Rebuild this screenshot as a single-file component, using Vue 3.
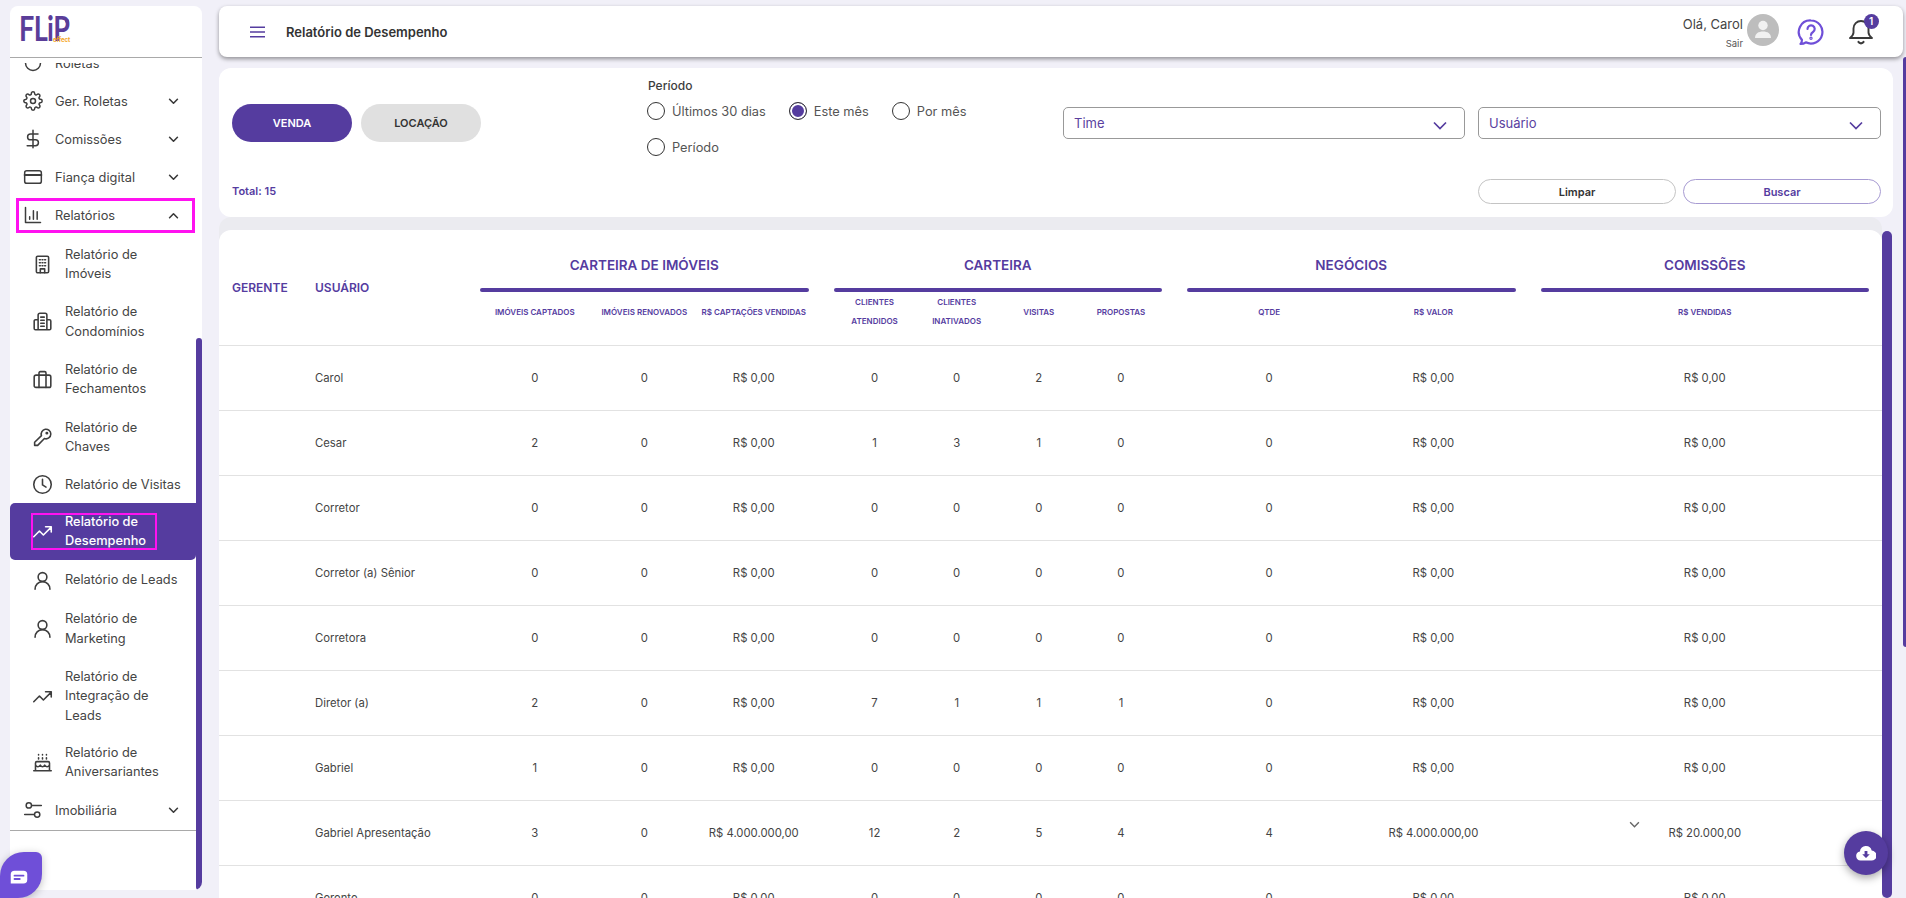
<script setup>
const iconPaths = {
  roleta: '<circle cx="12" cy="12" r="9"/>',
  gear: '<circle cx="12" cy="12" r="3"/><path d="M19.400 15a1.650 1.650 0 0 0 .33 1.820l.06.06a2 2 0 0 1 0 2.830 2 2 0 0 1-2.830 0l-.06-.06a1.650 1.650 0 0 0-1.820-.33 1.650 1.650 0 0 0-1 1.510V21a2 2 0 0 1-2 2 2 2 0 0 1-2-2v-.09A1.650 1.650 0 0 0 9 19.400a1.650 1.650 0 0 0-1.820.33l-.06.06a2 2 0 0 1-2.830 0 2 2 0 0 1 0-2.830l.06-.06a1.650 1.650 0 0 0 .33-1.820 1.650 1.650 0 0 0-1.510-1H3a2 2 0 0 1-2-2 2 2 0 0 1 2-2h.09A1.650 1.650 0 0 0 4.600 9a1.650 1.650 0 0 0-.33-1.820l-.06-.06a2 2 0 0 1 0-2.830 2 2 0 0 1 2.830 0l.06.06a1.650 1.650 0 0 0 1.820.33H9a1.650 1.650 0 0 0 1-1.510V3a2 2 0 0 1 2-2 2 2 0 0 1 2 2v.09a1.650 1.650 0 0 0 1 1.510 1.650 1.650 0 0 0 1.820-.33l.06-.06a2 2 0 0 1 2.830 0 2 2 0 0 1 0 2.830l-.06.06a1.650 1.650 0 0 0-.33 1.820V9a1.650 1.650 0 0 0 1.510 1H21a2 2 0 0 1 2 2 2 2 0 0 1-2 2h-.09a1.650 1.650 0 0 0-1.510 1z"/>',
  dollar: '<path d="M12 1.500v21M18 6H9a3.500 3.500 0 0 0 0 7h6a3.500 3.500 0 0 1 0 7H5"/>',
  card: '<rect x="2" y="4.500" width="20" height="15" rx="2.500"/><path d="M2 9.500h20" stroke-width="2.400"/>',
  chart: '<path d="M3 3v18h18M8 17v-3M12.500 17V7M17 17v-9"/>',
  building: '<rect x="5" y="2.500" width="14" height="19" rx="1.500"/><path d="M8.500 6.500h1M11.500 6.500h1M14.500 6.500h1M8.500 10h1M11.500 10h1M14.500 10h1M8.500 13.500h1M11.500 13.500h1M14.500 13.500h1M9.500 21.500V17h5v4.500"/>',
  condo: '<path d="M7 21.500V4.500a2 2 0 0 1 2-2h6a2 2 0 0 1 2 2v17zM7 10H4a1.500 1.500 0 0 0-1.500 1.500v8.500A1.500 1.500 0 0 0 4 21.500h3M17 10h3a1.500 1.500 0 0 1 1.500 1.500v8.500a1.500 1.500 0 0 1-1.500 1.500h-3M10 7h4M10 10.500h4M10 14h4M10 17.500h4"/>',
  case: '<rect x="2.500" y="7" width="19" height="14" rx="2"/><path d="M8 7V4.500A1.500 1.500 0 0 1 9.500 3h5A1.500 1.500 0 0 1 16 4.500V7M8 7v14M16 7v14"/>',
  key: '<path d="M21.500 8a5.500 5.500 0 0 1-7.300 5.200L6.500 21H3v-3.500l7.800-7.700A5.500 5.500 0 1 1 21.500 8z"/><circle cx="17" cy="7" r=".8"/>',
  clock: '<circle cx="12" cy="12" r="10"/><path d="M12 6v6.500l4 2.500"/>',
  trend: '<path d="M2 18l6.500-6.500 4.500 4.500 9-9M15.500 6.500H22v6"/>',
  user: '<circle cx="12" cy="8" r="5"/><path d="M3.500 22c0-5 3.500-8.500 8.500-8.500s8.500 3.500 8.500 8.500"/>',
  cake: '<path d="M2 21.500h20M4 21V12.500a1.500 1.500 0 0 1 1.500-1.500h13a1.500 1.500 0 0 1 1.500 1.500V21M4 15c2 2.500 3.500 2.500 5.500 0 1.500 2.500 3.500 2.500 5 0 2 2.500 3.500 2.500 5.500 0M7.500 8V6.500M12 8V6.500M16.500 8V6.500M7.500 3.500v-.5M12 3.500v-.5M16.500 3.500v-.5"/>',
  sliders: '<circle cx="7" cy="6.500" r="3.200"/><circle cx="17" cy="17.500" r="3.200"/><path d="M10.500 6.500H22M2 17.500h11.500"/>'
}

const topItems = [
  { label: 'Roletas', icon: 'roleta', noChev: true },
  { label: 'Ger. Roletas', icon: 'gear' },
  { label: 'Comissões', icon: 'dollar' },
  { label: 'Fiança digital', icon: 'card' }
]
const subItems = [
  { lines: ['Relatório de', 'Imóveis'], icon: 'building' },
  { lines: ['Relatório de', 'Condomínios'], icon: 'condo' },
  { lines: ['Relatório de', 'Fechamentos'], icon: 'case' },
  { lines: ['Relatório de', 'Chaves'], icon: 'key' },
  { lines: ['Relatório de Visitas'], icon: 'clock', cls: 'tight' },
  { lines: ['Relatório de', 'Desempenho'], icon: 'trend', active: true },
  { lines: ['Relatório de Leads'], icon: 'user' },
  { lines: ['Relatório de', 'Marketing'], icon: 'user' },
  { lines: ['Relatório de', 'Integração de', 'Leads'], icon: 'trend', cls: 'short' },
  { lines: ['Relatório de', 'Aniversariantes'], icon: 'cake' }
]
const radios = [
  { label: 'Últimos 30 dias' },
  { label: 'Este mês', on: true },
  { label: 'Por mês' },
  { label: 'Período', wrap: true }
]
const groups = [
  { title: 'CARTEIRA DE IMÓVEIS', cols: 3, subs: [['IMÓVEIS CAPTADOS'], ['IMÓVEIS RENOVADOS'], ['R$ CAPTAÇÕES VENDIDAS']] },
  { title: 'CARTEIRA', cols: 4, subs: [['CLIENTES', 'ATENDIDOS'], ['CLIENTES', 'INATIVADOS'], ['VISITAS'], ['PROPOSTAS']] },
  { title: 'NEGÓCIOS', cols: 2, subs: [['QTDE'], ['R$ VALOR']] },
  { title: 'COMISSÕES', cols: 1, subs: [['R$ VENDIDAS']] }
]
const z = 'R$ 0,00'
const rows = [
  ['Carol', [0, 0, z], [0, 0, 2, 0], [0, z], z],
  ['Cesar', [2, 0, z], [1, 3, 1, 0], [0, z], z],
  ['Corretor', [0, 0, z], [0, 0, 0, 0], [0, z], z],
  ['Corretor (a) Sênior', [0, 0, z], [0, 0, 0, 0], [0, z], z],
  ['Corretora', [0, 0, z], [0, 0, 0, 0], [0, z], z],
  ['Diretor (a)', [2, 0, z], [7, 1, 1, 1], [0, z], z],
  ['Gabriel', [1, 0, z], [0, 0, 0, 0], [0, z], z],
  ['Gabriel Apresentação', [3, 0, 'R$ 4.000.000,00'], [12, 2, 5, 4], [4, 'R$ 4.000.000,00'], 'R$ 20.000,00', true],
  ['Gerente', [0, 0, z], [0, 0, 0, 0], [0, z], z]
]
</script>

<template>
  <div class="page">
    <aside class="sidebar">
      <div class="logo">
        <span class="logo-word">FLiP</span>
        <span class="logo-dot"></span>
        <span class="logo-sub">effect</span>
      </div>
      <nav class="nav">
        <div class="nav-inner">
          <a v-for="it in topItems" :key="it.label" class="top-item">
            <svg class="ic" viewBox="0 0 24 24" v-html="iconPaths[it.icon]"></svg>
            <span class="top-label">{{ it.label }}</span>
            <svg v-if="!it.noChev" class="chev" viewBox="0 0 12 8"><path d="M1.500 1.500 6 6l4.500-4.500" /></svg>
          </a>
          <a class="top-item marked">
            <svg class="ic" viewBox="0 0 24 24" v-html="iconPaths.chart"></svg>
            <span class="top-label">Relatórios</span>
            <svg class="chev" viewBox="0 0 12 8"><path d="M1.500 6.500 6 2l4.500 4.500" /></svg>
          </a>
          <div class="sub-list">
            <a v-for="s in subItems" :key="s.lines.join()" class="sub-item" :class="[s.cls, { active: s.active }]">
              <svg class="ic sub-ic" viewBox="0 0 24 24" v-html="iconPaths[s.icon]"></svg>
              <span class="sub-label">
                <span v-for="l in s.lines" :key="l" class="sub-line">{{ l }}</span>
              </span>
              <span v-if="s.active" class="active-mark"></span>
            </a>
          </div>
          <a class="top-item">
            <svg class="ic" viewBox="0 0 24 24" v-html="iconPaths.sliders"></svg>
            <span class="top-label">Imobiliária</span>
            <svg class="chev" viewBox="0 0 12 8"><path d="M1.500 1.500 6 6l4.500-4.500" /></svg>
          </a>
        </div>
      </nav>
      <div class="nav-bottom"></div>
      <span class="side-scroll"></span>
    </aside>

    <div class="chat-blob">
      <svg viewBox="0 0 24 20" width="20" height="15"><path fill="#fff" d="M6 1h12a5 5 0 0 1 5 5v7a5 5 0 0 1-5 5H1V6a5 5 0 0 1 5-5z"/><path d="M6 7.500h12M6 12h7" stroke="#6f4fd8" stroke-width="2.400" stroke-linecap="round"/></svg>
    </div>

    <main class="main">
      <header class="topbar">
        <svg class="burger" viewBox="0 0 16 12"><path d="M0 1h16M0 6h16M0 11h16" /></svg>
        <h1 class="page-title">Relatório de Desempenho</h1>
        <div class="top-right">
          <div class="hello">
            <span class="hello-name">Olá, Carol</span>
            <span class="hello-out">Sair</span>
          </div>
          <span class="avatar">
            <svg viewBox="0 0 32 32" width="32" height="32"><circle cx="16" cy="11.500" r="4.700" fill="#f1f1f1"/><path fill="#f1f1f1" d="M8 24c0-4.500 3.500-6.500 8-6.500s8 2 8 6.500z"/></svg>
          </span>
          <svg class="help" viewBox="0 0 28 28" width="28" height="28"><path d="M14 2.500a11.500 11.500 0 1 1-5.200 21.800c-1.500 1.200-3.300 1.700-5.300 1.700 1-1.200 1.500-2.500 1.400-4.200A11.500 11.500 0 0 1 14 2.500z"/><path d="M10.500 11a3.600 3.600 0 1 1 5.500 3c-1.300.8-2 1.500-2 3" /><circle cx="14" cy="20.300" r=".6"/></svg>
          <span class="bell">
            <svg viewBox="0 0 26 28" width="26" height="28"><path d="M13 3a7.500 7.500 0 0 0-7.500 7.500v4c0 2.500-1.800 4-3.500 5.500h22c-1.700-1.500-3.500-3-3.500-5.500v-4A7.500 7.500 0 0 0 13 3z"/><path d="M10.500 24c1 1.700 4 1.700 5 0" stroke-width="2.200"/></svg>
            <span class="badge">1</span>
          </span>
        </div>
      </header>

      <section class="filters">
        <div class="filter-top">
          <div class="tabs">
            <button class="tab tab-on">VENDA</button>
            <button class="tab">LOCAÇÃO</button>
          </div>
          <div class="period">
            <div class="period-title">Período</div>
            <div class="radios">
              <label v-for="r in radios" :key="r.label" class="radio" :class="{ 'radio-wrap': r.wrap }">
                <span class="dot" :class="{ 'dot-on': r.on }"></span>{{ r.label }}
              </label>
            </div>
          </div>
          <div class="selects">
            <div class="select"><span>Time</span><svg class="sel-chev" viewBox="0 0 14 9"><path d="M1 1.500 7 7.500l6-6" /></svg></div>
            <div class="select"><span>Usuário</span><svg class="sel-chev" viewBox="0 0 14 9"><path d="M1 1.500 7 7.500l6-6" /></svg></div>
          </div>
        </div>
        <div class="filter-bottom">
          <span class="total">Total: 15</span>
          <div class="actions">
            <button class="act">Limpar</button>
            <button class="act act-main">Buscar</button>
          </div>
        </div>
      </section>

      <section class="table-card">
        <div class="row head">
          <div class="c-ger h-main">GERENTE</div>
          <div class="c-usr h-main">USUÁRIO</div>
          <div v-for="g in groups" :key="g.title" class="group head-group">
            <div class="g-title">{{ g.title }}</div>
            <div class="g-bar"></div>
            <div class="g-cols" :class="'cols-' + g.cols">
              <div v-for="s in g.subs" :key="s[0] + s.length + s[s.length - 1]" class="g-sub">
                <span v-for="l in s" :key="l">{{ l }}</span>
              </div>
            </div>
          </div>
        </div>
        <div v-for="r in rows" :key="r[0]" class="row body">
          <div class="c-ger"></div>
          <div class="c-usr">{{ r[0] }}</div>
          <div class="group g-cols cols-3"><span v-for="(v, i) in r[1]" :key="i">{{ v }}</span></div>
          <div class="group g-cols cols-4"><span v-for="(v, i) in r[2]" :key="i">{{ v }}</span></div>
          <div class="group g-cols cols-2"><span v-for="(v, i) in r[3]" :key="i">{{ v }}</span></div>
          <div class="group g-cols cols-1 last-cell">
            <span>{{ r[4] }}</span>
            <svg v-if="r[5]" class="row-chev" viewBox="0 0 12 8"><path d="M1 1.500 6 6.500l5-5" /></svg>
          </div>
        </div>
      </section>

      <span class="scroll-outer"></span>
      <span class="scroll-inner"></span>
      <button class="fab" aria-label="Baixar">
        <svg viewBox="0 0 24 18" width="20" height="15"><path fill="#fff" d="M12 0a7 7 0 0 1 6.800 5.500A6 6 0 0 1 18.500 17.500h-13A5.500 5.500 0 0 1 4.700 6.600 7 7 0 0 1 12 0z"/><path fill="#553c9f" d="M10.300 6h3.400v4h2.800L12 14.300 7.500 10h2.800z"/></svg>
      </button>
    </main>
  </div>
</template>

<style>
html, body { margin: 0; background: #f1f0f8; }
</style>

<style scoped>
.page {
  position: relative;
  display: flex;
  height: 898px;
  overflow: hidden;
  background: #f1f0f8;
  font-family: Inter, "Noto Sans", sans-serif;
  color: #444;
}
.sidebar {
  position: relative;
  width: 192px;
  margin: 6px 0 8px 10px;
  flex: none;
  display: flex;
  flex-direction: column;
  background: #fff;
  border-radius: 8px;
  overflow: hidden;
}
.logo {
  position: relative;
  height: 51px;
  flex: none;
  border-bottom: 1px solid #a9a9a9;
  box-sizing: content-box;
}
.logo-word {
  position: absolute;
  left: 9px;
  top: 4px;
  font: 700 27px/30px Lato, sans-serif;
  letter-spacing: -.6px;
  color: #5a3d99;
  transform: scaleY(1.25);
  transform-origin: 0 0;
}
.logo-dot {
  position: absolute;
  left: 55px;
  top: 13px;
  width: 4px;
  height: 4px;
  border-radius: 50%;
  background: #5a3d99;
}
.logo-sub {
  position: absolute;
  left: 43px;
  top: 30px;
  z-index: 1;
  font: 700 6px/8px Inter, sans-serif;
  color: #f5a623;
}
.nav {
  position: relative;
  height: 772px;
  flex: none;
  overflow: hidden;
  border-bottom: 1px solid #a9a9a9;
  width: 186px;
}
.nav::before {
  content: "";
  position: absolute;
  left: 0;
  right: 0;
  top: 0;
  height: 5px;
  background: #fff;
  z-index: 1;
}
.nav-inner { margin-top: -14px; }
.nav-bottom { flex: 1; }
.top-item {
  position: relative;
  display: flex;
  align-items: center;
  height: 38px;
  padding: 0 17px 0 13px;
  font-size: 12.800px;
}
.top-item.marked::after {
  content: "";
  position: absolute;
  left: 6px;
  right: 1px;
  top: 2px;
  bottom: 1px;
  border: 3px solid #ff12f0;
}
.ic {
  width: 20px;
  height: 20px;
  flex: none;
  fill: none;
  stroke: #3d3d3d;
  stroke-width: 1.800;
  stroke-linecap: round;
  stroke-linejoin: round;
}
.top-label { margin-left: 12px; flex: 1; white-space: nowrap; }
.chev {
  width: 11px;
  height: 7px;
  fill: none;
  stroke: #3a3a3a;
  stroke-width: 1.800;
  stroke-linecap: round;
  stroke-linejoin: round;
}
.sub-list { margin-top: 1.500px; }
.sub-item {
  position: relative;
  display: flex;
  align-items: center;
  padding: 9.400px 8px 9.400px 21.500px;
  font-size: 12.800px;
  line-height: 19.400px;
}
.sub-item.tight { margin-top: -1px; padding-bottom: 7.400px; }
.sub-item.short { padding-bottom: 8.400px; }
.sub-ic { width: 21px; height: 21px; }
.sub-label { margin-left: 12.500px; display: flex; flex-direction: column; }
.sub-line { white-space: nowrap; }
.sub-item.active {
  background: #553c9f;
  color: #fff;
  border-radius: 5px 0 5px 5px;
  font-weight: 500;
}
.sub-item.active .ic { stroke: #fff; }
.active-mark {
  position: absolute;
  left: 21px;
  top: 10px;
  width: 126px;
  height: 37px;
  box-sizing: border-box;
  border: 2px solid #ff12f0;
}
.side-scroll {
  position: absolute;
  right: 0;
  top: 332px;
  bottom: 0;
  width: 6px;
  border-radius: 3px;
  background: #553c9f;
}
.chat-blob {
  position: absolute;
  left: 0;
  top: 852px;
  width: 42px;
  height: 46px;
  box-sizing: border-box;
  padding: 4px 5px 0 0;
  display: flex;
  align-items: center;
  justify-content: center;
  background: #6f4fd8;
  border-radius: 24px 6px 24px 0;
  box-shadow: 0 2px 8px rgba(0, 0, 0, .25);
  z-index: 3;
}
.main {
  position: relative;
  flex: 1;
  margin-left: 17px;
  min-width: 0;
  padding-top: 6px;
}
.topbar {
  display: flex;
  align-items: center;
  height: 51px;
  width: 1684px;
  background: #fff;
  border-radius: 8px;
  box-shadow: 0 2px 4px rgba(0, 0, 0, .4);
  position: relative;
  z-index: 2;
}
.burger {
  width: 15px;
  height: 12px;
  margin-left: 31px;
  fill: none;
  stroke: #553c9f;
  stroke-width: 1.500;
}
.page-title {
  margin: 0 0 0 21px;
  font-size: 13px;
  line-height: 18px;
  font-weight: 600;
  color: #333;
}
.top-right { margin-left: auto; display: flex; align-items: center; }
.hello {
  display: flex;
  flex-direction: column;
  align-items: flex-end;
  margin-top: 1px;
}
.hello-name { font-size: 13px; line-height: 18px; color: #444; }
.hello-out { font-size: 9.500px; line-height: 13px; margin-top: 4px; color: #555; }
.avatar {
  width: 32px;
  height: 32px;
  margin: -3px 0 0 4px;
  border-radius: 50%;
  background: #bdbdbd;
  display: block;
}
.avatar svg { display: block; }
.help {
  margin-left: 17.500px;
  fill: none;
  stroke: #6f4fd8;
  stroke-width: 2.200;
  stroke-linecap: round;
  stroke-linejoin: round;
}
.bell {
  position: relative;
  margin: 0 29px 0 23.500px;
  width: 26px;
  height: 28px;
}
.bell svg {
  display: block;
  fill: none;
  stroke: #3a3a3a;
  stroke-width: 1.900;
  stroke-linecap: round;
  stroke-linejoin: round;
}
.badge {
  position: absolute;
  left: 15.500px;
  top: -4px;
  width: 15px;
  height: 15px;
  border-radius: 50%;
  background: #553c9f;
  color: #fff;
  font-size: 10px;
  font-weight: 600;
  line-height: 15px;
  text-align: center;
}
.filters {
  width: 1674px;
  height: 149px;
  margin-top: 11px;
  box-sizing: border-box;
  background: #fff;
  border-radius: 12px;
  padding: 11px 12px 13px 13px;
  display: flex;
  flex-direction: column;
}
.filter-top { display: flex; flex: 1; }
.tabs { display: flex; gap: 9px; margin-top: 25px; }
.tab {
  width: 120px;
  height: 38px;
  border: 0;
  border-radius: 19px;
  background: #e0e0e0;
  color: #333;
  font: 600 11px Inter, sans-serif;
}
.tab-on { background: #553c9f; color: #fff; }
.period { width: 417px; margin-left: 167px; }
.period-title { font-size: 12px; font-weight: 500; line-height: 14px; color: #3d3d3d; }
.radios {
  display: flex;
  flex-wrap: wrap;
  margin-top: 9px;
  row-gap: 18px;
}
.radio {
  display: flex;
  align-items: center;
  height: 18px;
  font-size: 12.800px;
  color: #555;
  margin-right: 23px;
}
.radio:first-child { margin-left: -1px; }
.radio-wrap { flex-basis: 100%; margin-left: -1px; }
.dot {
  width: 16px;
  height: 16px;
  margin-right: 7px;
  border: 1.500px solid #333;
  border-radius: 50%;
  flex: none;
  box-sizing: content-box;
  background: #fff;
}
.dot-on { background: #553c9f; box-shadow: inset 0 0 0 2px #fff; }
.selects { display: flex; gap: 13px; margin-top: 28px; margin-left: auto; }
.select {
  width: 403px;
  height: 32px;
  box-sizing: border-box;
  border: 1px solid #999;
  border-radius: 5px;
  display: flex;
  align-items: center;
  padding: 0 17px 0 10px;
  font-size: 13px;
  color: #5a3f9f;
  justify-content: space-between;
}
.sel-chev {
  width: 14px;
  height: 9px;
  margin-top: 4px;
  fill: none;
  stroke: #553c9f;
  stroke-width: 1.700;
}
.select:first-child { width: 402px; }
.filter-bottom { display: flex; align-items: center; justify-content: space-between; }
.total { font-size: 11px; font-weight: 600; color: #553c9f; margin-top: -2px; }
.actions { display: flex; gap: 7px; }
.act {
  width: 198px;
  height: 25px;
  border-radius: 13px;
  border: 1px solid #c4c4c4;
  background: #fff;
  color: #333;
  font: 600 11px Inter, sans-serif;
}
.act-main { border-color: #a79bd2; color: #553c9f; }
.table-card {
  width: 1663px;
  margin-top: 13px;
  background: #fff;
  border-radius: 12px 12px 0 0;
  box-shadow: 0 -13px 0 #ebebf0;
}
.row { display: flex; border-bottom: 1px solid #e2e2e2; box-sizing: border-box; }
.head { height: 116px; align-items: center; }
.c-ger { width: 96px; padding-left: 13px; box-sizing: border-box; flex: none; }
.c-usr { width: 165px; flex: none; box-sizing: border-box; padding-left: 0; font-size: 11.300px; }
.h-main { font-size: 12px; font-weight: 600; color: #553c9f; }
.group { flex: none; width: 328.500px; margin-left: 25px; text-align: center; }
.group:nth-child(3) { margin-left: 0; }
.head-group { align-self: flex-start; padding-top: 26px; }
.g-title { font-size: 13.500px; font-weight: 600; line-height: 18px; color: #553c9f; }
.g-bar { height: 4px; margin-top: 14px; border-radius: 2px; background: #553c9f; }
.g-cols { display: grid; align-items: center; justify-items: center; }
.cols-1 { grid-template-columns: 1fr; }
.cols-2 { grid-template-columns: 1fr 1fr; }
.cols-3 { grid-template-columns: 1fr 1fr 1fr; }
.cols-4 { grid-template-columns: 1fr 1fr 1fr 1fr; }
.head-group .g-cols { height: 38px; margin-top: 1px; }
.g-sub {
  display: flex;
  flex-direction: column;
  font-size: 8px;
  font-weight: 600;
  line-height: 19px;
  color: #553c9f;
  white-space: nowrap;
}
.body {
  height: 65px;
  align-items: center;
  font-size: 11.300px;
  color: #444;
}
.body .group { height: 100%; }
.last-cell { position: relative; }
.row-chev {
  position: absolute;
  left: 88px;
  top: 20px;
  width: 11px;
  height: 7px;
  fill: none;
  stroke: #666;
  stroke-width: 1.600;
}
.scroll-outer {
  position: absolute;
  left: 1684px;
  top: 57px;
  width: 3px;
  height: 590px;
  background: #553c9f;
  border-radius: 3px 0 0 3px;
}
.scroll-inner {
  position: absolute;
  left: 1663px;
  top: 231px;
  width: 10px;
  height: 667px;
  background: #553c9f;
  border-radius: 5px;
}
.fab {
  position: absolute;
  left: 1625px;
  top: 831px;
  width: 44px;
  height: 44px;
  border: 0;
  border-radius: 50%;
  background: #553c9f;
  box-shadow: 0 3px 8px rgba(0, 0, 0, .35);
  display: flex;
  align-items: center;
  justify-content: center;
  padding: 0;
}
</style>
